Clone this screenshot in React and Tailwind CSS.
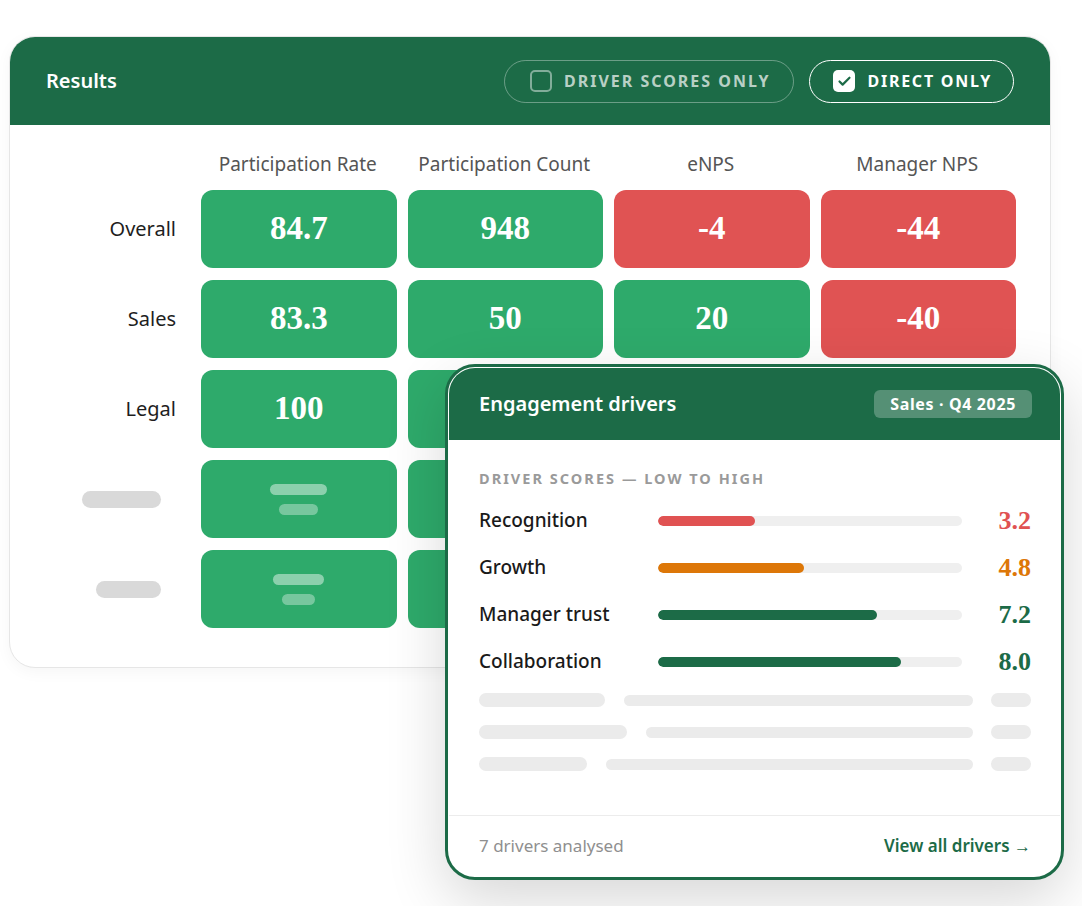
import { Check } from "lucide-react";

const sans = { fontFamily: "'Noto Sans', Roboto, sans-serif" };

const columns = ["Participation Rate", "Participation Count", "eNPS", "Manager NPS"];

const rows = [
  { label: "Overall", cells: [["84.7", "g"], ["948", "g"], ["-4", "r"], ["-44", "r"]] },
  { label: "Sales", cells: [["83.3", "g"], ["50", "g"], ["20", "g"], ["-40", "r"]] },
  { label: "Legal", cells: [["100", "g"], ["", "g"], ["", "g"], ["", "g"]] },
];

const drivers = [
  { name: "Recognition", pct: 32, value: "3.2", bar: "bg-[#e05252]", text: "text-[#e05252]" },
  { name: "Growth", pct: 48, value: "4.8", bar: "bg-[#dd7708]", text: "text-[#dd7708]" },
  { name: "Manager trust", pct: 72, value: "7.2", bar: "bg-[#1c6b47]", text: "text-[#1c6b47]" },
  { name: "Collaboration", pct: 80, value: "8.0", bar: "bg-[#1c6b47]", text: "text-[#1c6b47]" },
];

const skeletons = [126, 148, 108];

function Cell({ value, tone }) {
  return (
    <div
      className={`h-[78px] rounded-[12px] flex items-center justify-center text-white font-bold text-[33px] ${
        tone === "r" ? "bg-[#e05353]" : "bg-[#2eaa6b]"
      }`}
      style={{ fontFamily: "'Liberation Serif', serif" }}
    >
      {value}
    </div>
  );
}

function SkeletonCell({ top, bottom }) {
  return (
    <div className="h-[78px] rounded-[12px] bg-[#2eaa6b] flex flex-col items-center justify-center gap-[9px]">
      <div className="h-[11px] rounded-full bg-white/45" style={{ width: top }} />
      <div className="h-[11px] rounded-full bg-white/35" style={{ width: bottom }} />
    </div>
  );
}

export default function App() {
  return (
    <div className="relative w-[1082px] h-[906px] bg-white overflow-hidden" style={sans}>
      <div className="pt-[36px] pl-[9px]">
        {/* Results card */}
        <div className="w-[1042px] h-[632px] rounded-[26px] border border-[#e6e6e6] bg-white overflow-hidden shadow-[0_4px_16px_rgba(0,0,0,0.04)]">
          <div className="h-[88px] bg-[#1c6b47] flex items-center justify-between pl-[36px] pr-[36px]">
            <h2 className="text-white text-[20px] font-semibold">Results</h2>
            <div className="flex items-center gap-[15px]">
              <button className="h-[43px] rounded-full border border-white/35 flex items-center gap-[12px] pl-[25px] pr-[23px]">
                <span className="w-[22px] h-[22px] rounded-[5px] border-2 border-white/45" />
                <span className="text-[16px] font-bold tracking-[0.125em] text-white/70">DRIVER SCORES ONLY</span>
              </button>
              <button className="h-[43px] rounded-full border border-white flex items-center gap-[12px] pl-[23px] pr-[21px]">
                <span className="w-[22px] h-[22px] rounded-[5px] bg-white flex items-center justify-center">
                  <Check className="w-[15px] h-[15px] text-[#1c6b47]" strokeWidth={3.5} />
                </span>
                <span className="text-[16px] font-bold tracking-[0.11em] text-white">DIRECT ONLY</span>
              </button>
            </div>
          </div>

          <div className="pt-[25px] pl-[190px]">
            <div className="grid grid-cols-4 gap-x-[11px] w-[815px] h-[24px] items-center text-[19px] text-[#555555] text-center">
              {columns.map((c) => (
                <div key={c}>{c}</div>
              ))}
            </div>
          </div>

          <div className="mt-[16px] flex flex-col gap-[12px]">
            {rows.map((r) => (
              <div key={r.label} className="flex items-center">
                <div className="w-[166px] text-right text-[20px] text-[#1e1e1e]">{r.label}</div>
                <div className="ml-[25px] grid grid-cols-4 gap-x-[11px] w-[815px]">
                  {r.cells.map(([v, t], i) => (
                    <Cell key={i} value={v} tone={t} />
                  ))}
                </div>
              </div>
            ))}
            {[
              [79, 57, 39],
              [65, 51, 33],
            ].map(([lw, t, b], idx) => (
              <div key={idx} className="flex items-center">
                <div className="w-[151px] flex justify-end">
                  <div className="h-[17px] rounded-full bg-[#d9d9d9]" style={{ width: lw }} />
                </div>
                <div className="ml-[40px] grid grid-cols-4 gap-x-[11px] w-[815px]">
                  <SkeletonCell top={t} bottom={b} />
                  <SkeletonCell top={t} bottom={b} />
                  <SkeletonCell top={t} bottom={b} />
                  <SkeletonCell top={t} bottom={b} />
                </div>
              </div>
            ))}
          </div>
        </div>
      </div>

      {/* Engagement drivers overlay */}
      <div className="absolute left-[445px] top-[364px] w-[619px] h-[516px] rounded-[30px] border-[3px] border-[#1c6b47] bg-white p-[1px] shadow-[0_20px_60px_rgba(0,0,0,0.16)] flex flex-col">
        <div className="h-[72px] shrink-0 rounded-t-[26px] bg-[#1c6b47] flex items-center justify-between pl-[30px] pr-[28px]">
          <h3 className="text-white text-[20px] font-semibold">Engagement drivers</h3>
          <span className="h-[28px] px-[16px] rounded-[6px] bg-white/25 text-white text-[16px] font-bold tracking-[0.04em] flex items-center">
            Sales · Q4 2025
          </span>
        </div>

        <div className="flex-1 pl-[30px] pr-[29px] pt-[28px]">
          <div className="text-[14.5px] font-bold tracking-[0.14em] text-[#9a9a9a] leading-[20px]">
            DRIVER SCORES — LOW TO HIGH
          </div>
          <div className="mt-[9px] flex flex-col">
            {drivers.map((d) => (
              <div key={d.name} className="h-[47px] flex items-center">
                <div className="w-[179px] text-[19px] font-medium text-[#1a1a1a]">{d.name}</div>
                <div className="w-[304px] h-[10px] rounded-full bg-[#efefef] overflow-hidden">
                  <div className={`h-full rounded-full ${d.bar}`} style={{ width: `${d.pct}%` }} />
                </div>
                <div
                  className={`flex-1 text-right font-bold text-[26px] ${d.text}`}
                  style={{ fontFamily: "'Liberation Serif', serif" }}
                >
                  {d.value}
                </div>
              </div>
            ))}
          </div>
          <div className="mt-[8px] flex flex-col gap-[18px]">
            {skeletons.map((w, i) => (
              <div key={i} className="flex items-center">
                <div className="h-[14px] rounded-full bg-[#ebebeb]" style={{ width: w }} />
                <div className="flex-1 ml-[19px] mr-[18px] h-[11px] rounded-full bg-[#ebebeb]" />
                <div className="w-[40px] h-[14px] rounded-full bg-[#ebebeb]" />
              </div>
            ))}
          </div>
        </div>

        <div className="h-[61px] shrink-0 border-t border-[#ececec] flex items-center justify-between pl-[30px] pr-[29px]">
          <span className="text-[17px] text-[#8f8f8f]">7 drivers analysed</span>
          <span className="text-[17px] font-semibold text-[#1c6b47]">View all drivers →</span>
        </div>
      </div>
    </div>
  );
}
